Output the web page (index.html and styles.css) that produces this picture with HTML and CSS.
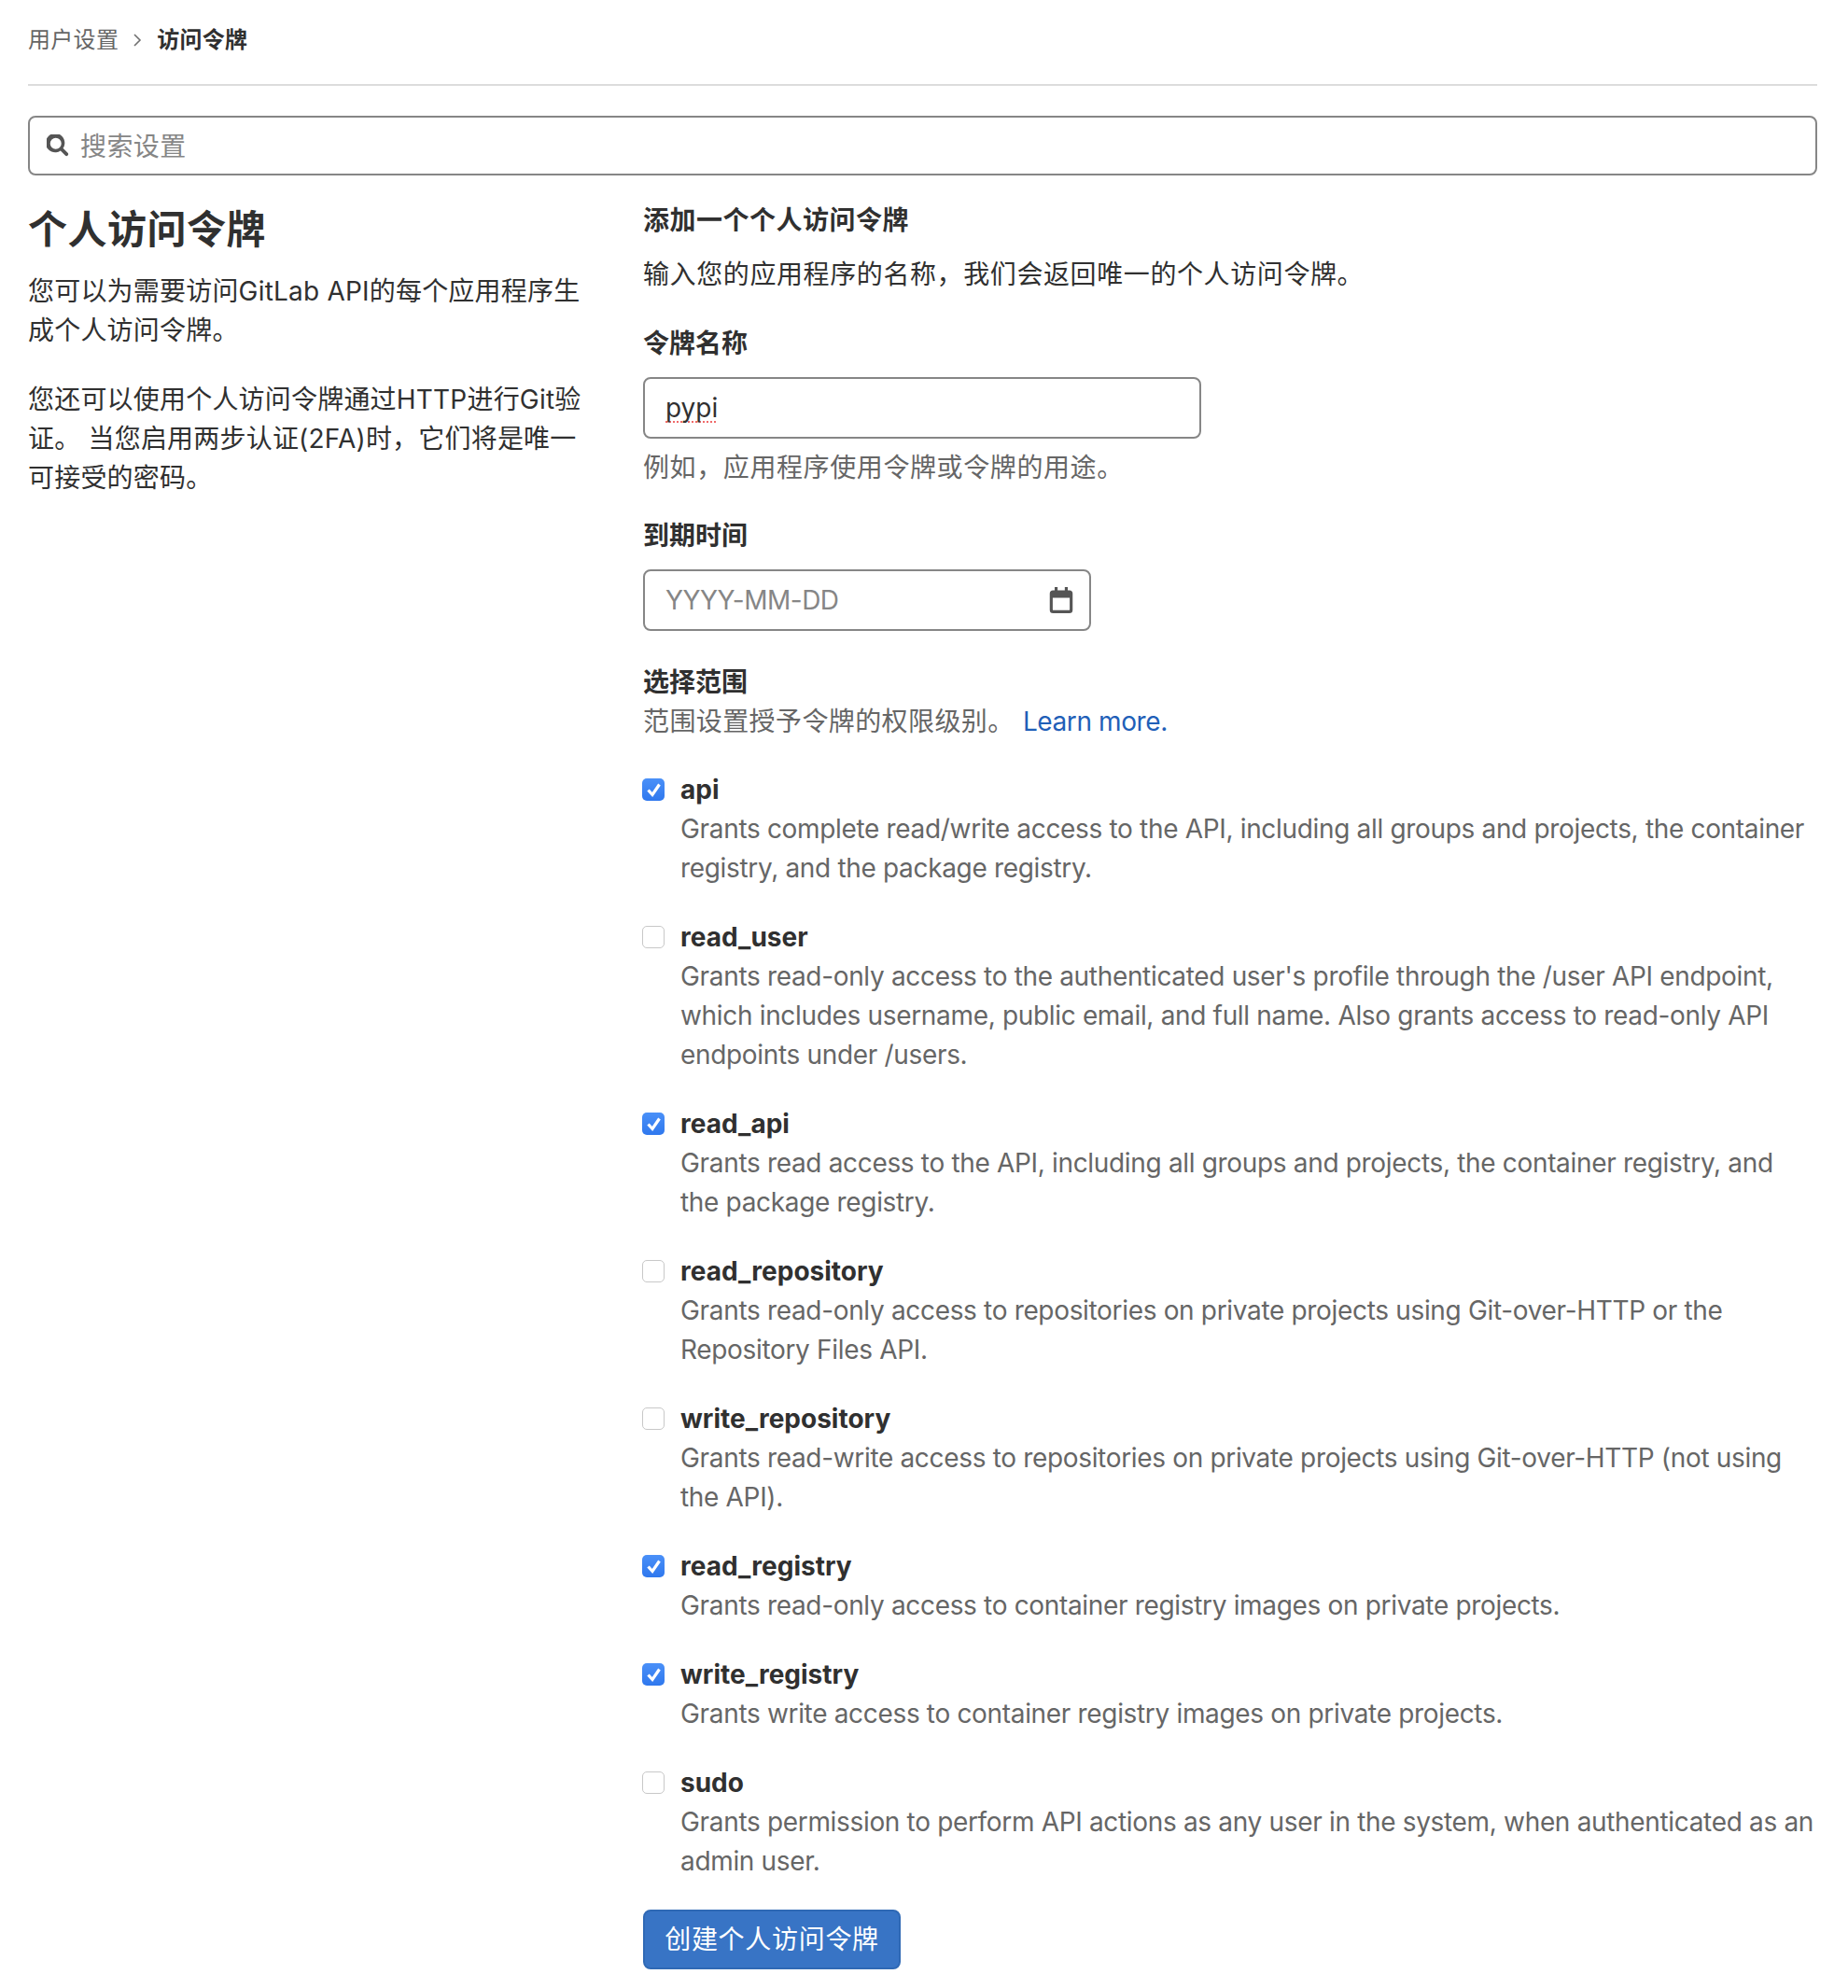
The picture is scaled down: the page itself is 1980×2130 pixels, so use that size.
FILE: index.html
```html
<!DOCTYPE html>
<html lang="zh-CN">
<head>
<meta charset="utf-8">
<title>个人访问令牌</title>
<link rel="stylesheet" href="styles.css">
</head>
<body>
<div class="page">
  <nav class="crumbs">
    <span class="crumb">用户设置</span>
    <svg class="chev" viewBox="0 0 10 16" width="10" height="16"><path d="M2 2l6 6-6 6" fill="none" stroke="#707070" stroke-width="1.6"/></svg>
    <strong class="crumb-cur">访问令牌</strong>
  </nav>
  <div class="search">
    <svg class="search-icon" viewBox="0 0 16 16" width="24" height="24"><path fill="#555" fill-rule="evenodd" d="M11.700 9.900l3.500 3.500a1.300 1.300 0 0 1-1.800 1.800l-3.500-3.500a6.800 6.800 0 1 1 1.800-1.800zM6.500 10.500a4 4 0 1 0 0-8 4 4 0 0 0 0 8z"/></svg>
    <span class="placeholder search-text">搜索设置</span>
  </div>
  <main class="cols">
    <section class="side">
      <h4 class="side-title">个人访问令牌</h4>
      <p class="side-text">您可以为需要访问GitLab API的每个应用程序生成个人访问令牌。</p>
      <p class="side-text">您还可以使用个人访问令牌通过HTTP进行Git验证。 当您启用两步认证(2FA)时，它们将是唯一可接受的密码。</p>
    </section>
    <section class="form">
      <h5 class="form-title">添加一个个人访问令牌</h5>
      <p class="lead">输入您的应用程序的名称，我们会返回唯一的个人访问令牌。</p>
      <div class="label">令牌名称</div>
      <div class="field field-name"><span class="typed">pypi</span></div>
      <p class="hint">例如，应用程序使用令牌或令牌的用途。</p>
      <div class="label">到期时间</div>
      <div class="field field-date">
        <span class="placeholder date-text">YYYY-MM-DD</span>
        <svg class="cal" viewBox="0 0 16 16" width="28" height="28"><path fill="#555" fill-rule="evenodd" d="M4 0h1.800v2h4.400V0H12v2h1a2 2 0 0 1 2 2v10a2 2 0 0 1-2 2H3a2 2 0 0 1-2-2V4a2 2 0 0 1 2-2h1V0zM2.800 6.500V13.700c0 .3.200.5.500.5h9.400c.3 0 .5-.2.500-.5V6.500H2.800z"/></svg>
      </div>
      <div class="label label-scope">选择范围</div>
      <p class="scope-hint">范围设置授予令牌的权限级别。 <a class="link" href="#">Learn more.</a></p>

      <div class="scope">
        <span class="box on"><svg viewBox="0 0 24 24" width="24" height="24"><path d="M6.500 12.500l4.500 5 7.500-11" fill="none" stroke="#fff" stroke-width="3.200"/></svg></span>
        <div class="scope-body"><div class="scope-name">api</div><p class="scope-desc">Grants complete read/write access to the API, including all groups and projects, the container registry, and the package registry.</p></div>
      </div>
      <div class="scope">
        <span class="box"></span>
        <div class="scope-body"><div class="scope-name">read_user</div><p class="scope-desc">Grants read-only access to the authenticated user's profile through the /user API endpoint, which includes username, public email, and full name. Also grants access to read-only API endpoints under /users.</p></div>
      </div>
      <div class="scope">
        <span class="box on"><svg viewBox="0 0 24 24" width="24" height="24"><path d="M6.500 12.500l4.500 5 7.500-11" fill="none" stroke="#fff" stroke-width="3.200"/></svg></span>
        <div class="scope-body"><div class="scope-name">read_api</div><p class="scope-desc">Grants read access to the API, including all groups and projects, the container registry, and the package registry.</p></div>
      </div>
      <div class="scope">
        <span class="box"></span>
        <div class="scope-body"><div class="scope-name">read_repository</div><p class="scope-desc">Grants read-only access to repositories on private projects using Git-over-HTTP or the Repository Files API.</p></div>
      </div>
      <div class="scope">
        <span class="box"></span>
        <div class="scope-body"><div class="scope-name">write_repository</div><p class="scope-desc">Grants read-write access to repositories on private projects using Git-over-HTTP (not using the API).</p></div>
      </div>
      <div class="scope">
        <span class="box on"><svg viewBox="0 0 24 24" width="24" height="24"><path d="M6.500 12.500l4.500 5 7.500-11" fill="none" stroke="#fff" stroke-width="3.200"/></svg></span>
        <div class="scope-body"><div class="scope-name">read_registry</div><p class="scope-desc">Grants read-only access to container registry images on private projects.</p></div>
      </div>
      <div class="scope">
        <span class="box on"><svg viewBox="0 0 24 24" width="24" height="24"><path d="M6.500 12.500l4.500 5 7.500-11" fill="none" stroke="#fff" stroke-width="3.200"/></svg></span>
        <div class="scope-body"><div class="scope-name">write_registry</div><p class="scope-desc">Grants write access to container registry images on private projects.</p></div>
      </div>
      <div class="scope">
        <span class="box"></span>
        <div class="scope-body"><div class="scope-name">sudo</div><p class="scope-desc">Grants permission to perform API actions as any user in the system, when authenticated as an admin user.</p></div>
      </div>
      <button class="submit" type="button">创建个人访问令牌</button>
    </section>
  </main>
</div>
</body>
</html>
```
FILE: styles.css
```css
* { box-sizing: border-box; }
html, body { margin: 0; padding: 0; background: #fff; }
body {
  font-family: Inter, "Noto Sans CJK SC", sans-serif;
  font-size: 28px;
  line-height: 42px;
  color: #303030;
}
.page { padding: 0 33px 20px 30px; }
.crumbs {
  display: flex;
  align-items: center;
  height: 92px;
  border-bottom: 2px solid #dcdcdc;
  font-size: 24px;
  letter-spacing: 0.3px;
  padding-bottom: 4px;
}
.crumb { color: #666; }
.chev { margin: 0 16px 0 15px; }
.crumb-cur { font-weight: 700; color: #303030; }
.search {
  display: flex;
  align-items: center;
  height: 64px;
  margin-top: 32px;
  padding: 0 18px;
  border: 2px solid #868686;
  border-radius: 8px;
}
.search-icon { margin-right: 12px; flex: none; }
.search-text { padding-top: 2px; letter-spacing: 0.4px; }
.placeholder { color: #868686; }
.date-text { letter-spacing: -0.5px; }
.cols {
  display: grid;
  grid-template-columns: 610px 1258px;
  column-gap: 49px;
}
.side-title {
  margin: 33px 0 20px;
  font-size: 42px;
  line-height: 50px;
  font-weight: 700;
  letter-spacing: 0.5px;
}
.side-text { margin: 0 0 32px; letter-spacing: 0.2px; }
.form { padding-top: 27px; }
.form-title { margin: 0 0 16px; font-size: 28px; line-height: 42px; font-weight: 700; letter-spacing: 0.5px; }
.lead { margin: 0 0 32px; letter-spacing: 0.6px; }
.label { font-weight: 700; margin-bottom: 15px; }
.label-scope { margin-bottom: 0; margin-top: 34px; }
.field {
  display: flex;
  align-items: center;
  height: 66px;
  padding: 0 22px;
  border: 2px solid #868686;
  border-radius: 8px;
}
.field-name { width: 598px; }
.field-date { width: 480px; justify-content: space-between; padding-right: 16px; }
.typed {
  text-decoration: underline dotted #f06a6a 2px;
  text-decoration-skip-ink: none;
  text-underline-offset: 4px;
}
.hint { margin: 10px 0 31px; color: #666; letter-spacing: 0.6px; }
.scope-hint { margin: 0 0 30px; color: #666; letter-spacing: 0.4px; }
.link { margin-left: 1px; color: #1f5fb8; text-decoration: none; letter-spacing: -0.4px; }
.scope { display: flex; margin-bottom: 32px; }
.scope-body { padding-top: 1px; margin-bottom: -1px; }
.box {
  flex: none;
  width: 24px;
  height: 24px;
  margin: 10px 17px 0 -1px;
  border: 1px solid #c8c8c8;
  border-radius: 5px;
  background: #fff;
}
.box svg { display: block; }
.box.on { border: 0; background: linear-gradient(#4a90f8, #2f78ee); }
.scope-name { font-weight: 700; }
.scope-desc { margin: 0; color: #666; letter-spacing: -0.33px; }
.submit {
  display: block;
  width: 276px;
  height: 64px;
  padding: 0;
  border: 2px solid #2f69b5;
  border-radius: 8px;
  background: #3874c5;
  color: #fff;
  font: inherit;
  letter-spacing: 0.7px;
}
```
